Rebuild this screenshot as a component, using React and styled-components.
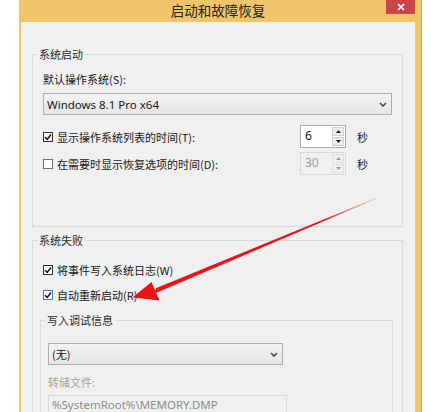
import styled, { createGlobalStyle } from 'styled-components';

const GlobalStyle = createGlobalStyle`
  html, body {
    margin: 0;
    padding: 0;
    background: #fff;
  }
  body {
    font-family: "Noto Sans CJK SC", "Noto Sans", sans-serif;
    color: #161616;
    overflow: hidden;
  }
`;

export default function App() {
  return (
    <Page>
      <GlobalStyle />
      <Window>
        <TitleBar>
          <Title>启动和故障恢复</Title>
          <CloseButton>
            <svg width="8" height="8" viewBox="0 0 8 8">
              <path d="M1 1 L7 7 M7 1 L1 7" stroke="#fff" strokeWidth="1.7" />
            </svg>
          </CloseButton>
        </TitleBar>

        <Body>
          <GroupBox pad="17px 10px 51px 10px">
            <GroupTitle>系统启动</GroupTitle>
            <FieldLabel>默认操作系统(S):</FieldLabel>
            <Select top={7}>
              <SelectText latin>Windows 8.1 Pro x64</SelectText>
              <Chevron />
            </Select>

            <TimeRow top={10}>
              <CheckItem checked>显示操作系统列表的时间(T):</CheckItem>
              <Spinner value="6" />
              <Unit>秒</Unit>
            </TimeRow>
            <TimeRow top={4}>
              <CheckItem>在需要时显示恢复选项的时间(D):</CheckItem>
              <Spinner value="30" disabled />
              <Unit>秒</Unit>
            </TimeRow>
          </GroupBox>

          <GroupBox pad="22px 10px 20px 10px" top={13}>
            <GroupTitle>系统失败</GroupTitle>
            <CheckItem checked>将事件写入系统日志(W)</CheckItem>
            <CheckItem checked focused top={11}>
              自动重新启动(R)
            </CheckItem>

            <InnerGroup pad="22px 8px 20px 7px" top={18}>
              <GroupTitle>写入调试信息</GroupTitle>
              <Select width={235}>
                <SelectText>(无)</SelectText>
                <Chevron />
              </Select>
              <FieldLabel disabled top={10}>
                转储文件:
              </FieldLabel>
              <TextField top={6}>%SystemRoot%\MEMORY.DMP</TextField>
            </InnerGroup>
          </GroupBox>
        </Body>
      </Window>

      <Arrow viewBox="0 0 431 412">
        <defs>
          <linearGradient id="shaft" x1="377" y1="198" x2="155" y2="291" gradientUnits="userSpaceOnUse">
            <stop offset="0" stopColor="#e0606a" stopOpacity="0.35" />
            <stop offset="0.25" stopColor="#e3141c" />
            <stop offset="1" stopColor="#ee1218" />
          </linearGradient>
        </defs>
        <polygon points="377.2,197.6 376.8,198.4 153.6,294 156.4,288" fill="url(#shaft)" />
        <polygon points="151.5,282 159.5,300.5 132.5,297.5" fill="#ee1218" />
      </Arrow>
    </Page>
  );
}

function CheckItem({ checked, focused, top, children }) {
  return (
    <CheckRow top={top}>
      <Box checked={checked} focused={focused}>
        {checked && (
          <svg width="8" height="8" viewBox="0 0 8 8">
            <path d="M1 4.2 L3.2 6.4 L7 1.4" stroke="#1a1a1a" strokeWidth="1.6" fill="none" />
          </svg>
        )}
      </Box>
      <span>{children}</span>
    </CheckRow>
  );
}

function Spinner({ value, disabled }) {
  return (
    <SpinBox disabled={disabled}>
      <SpinValue disabled={disabled}>{value}</SpinValue>
      <SpinButtons>
        <SpinButton disabled={disabled}>
          <svg width="5" height="3" viewBox="0 0 5 3">
            <path d="M0 3 L2.5 0 L5 3 Z" fill={disabled ? '#9a9a9a' : '#222'} />
          </svg>
        </SpinButton>
        <SpinButton disabled={disabled}>
          <svg width="5" height="3" viewBox="0 0 5 3">
            <path d="M0 0 L2.5 3 L5 0 Z" fill={disabled ? '#9a9a9a' : '#222'} />
          </svg>
        </SpinButton>
      </SpinButtons>
    </SpinBox>
  );
}

function Chevron() {
  return (
    <ChevronIcon width="8" height="5" viewBox="0 0 8 5">
      <path d="M1 1 L4 4 L7 1" stroke="#404040" strokeWidth="1.5" fill="none" />
    </ChevronIcon>
  );
}

const Page = styled.div`
  position: relative;
  width: 431px;
  height: 412px;
  overflow: hidden;
  padding-left: 19px;
  box-sizing: border-box;
`;

const Window = styled.div`
  width: 403px;
  height: 100%;
  box-sizing: border-box;
  background: #f0c56a;
  padding: 0 6px 0 2px;
  border-right: 1px solid #cfa655;
  display: flex;
  flex-direction: column;
`;

const TitleBar = styled.div`
  position: relative;
  height: 22px;
  flex-shrink: 0;
  display: flex;
  align-items: center;
  justify-content: center;
`;

const Title = styled.div`
  font-size: 13.5px;
  line-height: 20px;
  color: #222;
  margin-top: -2px;
`;

const CloseButton = styled.div`
  position: absolute;
  top: 0;
  right: 0;
  width: 29px;
  height: 14px;
  background: #c9464c;
  display: flex;
  align-items: center;
  justify-content: center;
`;

const Body = styled.div`
  flex: 1;
  background: #f0f0f0;
  padding: 32px 12px 0 11px;
`;

const GroupBox = styled.div`
  position: relative;
  border: 1px solid #d9d9d9;
  padding: ${(p) => p.pad};
  margin-top: ${(p) => p.top || 0}px;
`;

const InnerGroup = styled(GroupBox)`
  margin-left: -3px;
  margin-right: -1px;
`;

const GroupTitle = styled.div`
  position: absolute;
  top: -8px;
  left: 4px;
  padding: 0 2px;
  background: #f0f0f0;
  font-size: 11px;
  line-height: 14px;
  color: #2a2a2a;
`;

const FieldLabel = styled.div`
  font-size: 11px;
  line-height: 14px;
  margin-top: ${(p) => p.top || 0}px;
  color: ${(p) => (p.disabled ? '#a3a3a3' : '#161616')};
`;

const Select = styled.div`
  margin-top: ${(p) => p.top || 0}px;
  width: ${(p) => (p.width ? `${p.width}px` : 'auto')};
  height: 22px;
  box-sizing: border-box;
  border: 1px solid #adadad;
  background: linear-gradient(#f3f3f3, #e6e6e6);
  display: flex;
  align-items: center;
  justify-content: space-between;
  padding: 0 4px 0 3px;
`;

const SelectText = styled.span`
  font-family: ${(p) => (p.latin ? '"Noto Sans", sans-serif' : 'inherit')};
  font-size: ${(p) => (p.latin ? '11.5px' : '11px')};
  color: #161616;
`;

const ChevronIcon = styled.svg`
  display: block;
`;

const TimeRow = styled.div`
  display: grid;
  grid-template-columns: 257px 46px 1fr;
  align-items: center;
  margin-top: ${(p) => p.top || 0}px;
`;

const CheckRow = styled.label`
  display: flex;
  align-items: center;
  gap: 4px;
  font-size: 11px;
  line-height: 14px;
  margin-top: ${(p) => p.top || 0}px;
`;

const Box = styled.span`
  width: 10px;
  height: 10px;
  box-sizing: border-box;
  border: 1px solid ${(p) => (p.focused ? '#4a7fb5' : p.checked ? '#333' : '#6e6e6e')};
  background: #fff;
  display: flex;
  align-items: center;
  justify-content: center;
`;

const SpinBox = styled.div`
  height: 23px;
  box-sizing: border-box;
  border: 1px solid ${(p) => (p.disabled ? '#d9d9d9' : '#acacac')};
  background: ${(p) => (p.disabled ? '#f0f0f0' : '#fff')};
  display: flex;
`;

const SpinValue = styled.div`
  flex: 1;
  padding: 2px 0 0 4px;
  font-family: "Noto Sans", sans-serif;
  font-size: 12px;
  line-height: 16px;
  color: ${(p) => (p.disabled ? '#a0a0a0' : '#161616')};
`;

const SpinButtons = styled.div`
  width: 12px;
  padding: 1px 1px 1px 0;
  display: flex;
  flex-direction: column;
  gap: 1px;
`;

const SpinButton = styled.div`
  flex: 1;
  border: 1px solid ${(p) => (p.disabled ? '#e0e0e0' : '#d0d0d0')};
  background: ${(p) => (p.disabled ? '#f0f0f0' : '#ececec')};
  display: flex;
  align-items: center;
  justify-content: center;
`;

const Unit = styled.span`
  font-size: 11px;
  padding-left: 11px;
  color: #161616;
`;

const TextField = styled.div`
  margin-top: ${(p) => p.top || 0}px;
  width: 239px;
  height: 22px;
  box-sizing: border-box;
  border: 1px solid #d9d9d9;
  padding: 2px 0 0 3px;
  font-family: "Noto Sans", sans-serif;
  font-size: 11.5px;
  line-height: 13px;
  color: #8c8c8c;
`;

const Arrow = styled.svg`
  position: absolute;
  top: 0;
  left: 0;
  width: 431px;
  height: 412px;
  pointer-events: none;
`;
